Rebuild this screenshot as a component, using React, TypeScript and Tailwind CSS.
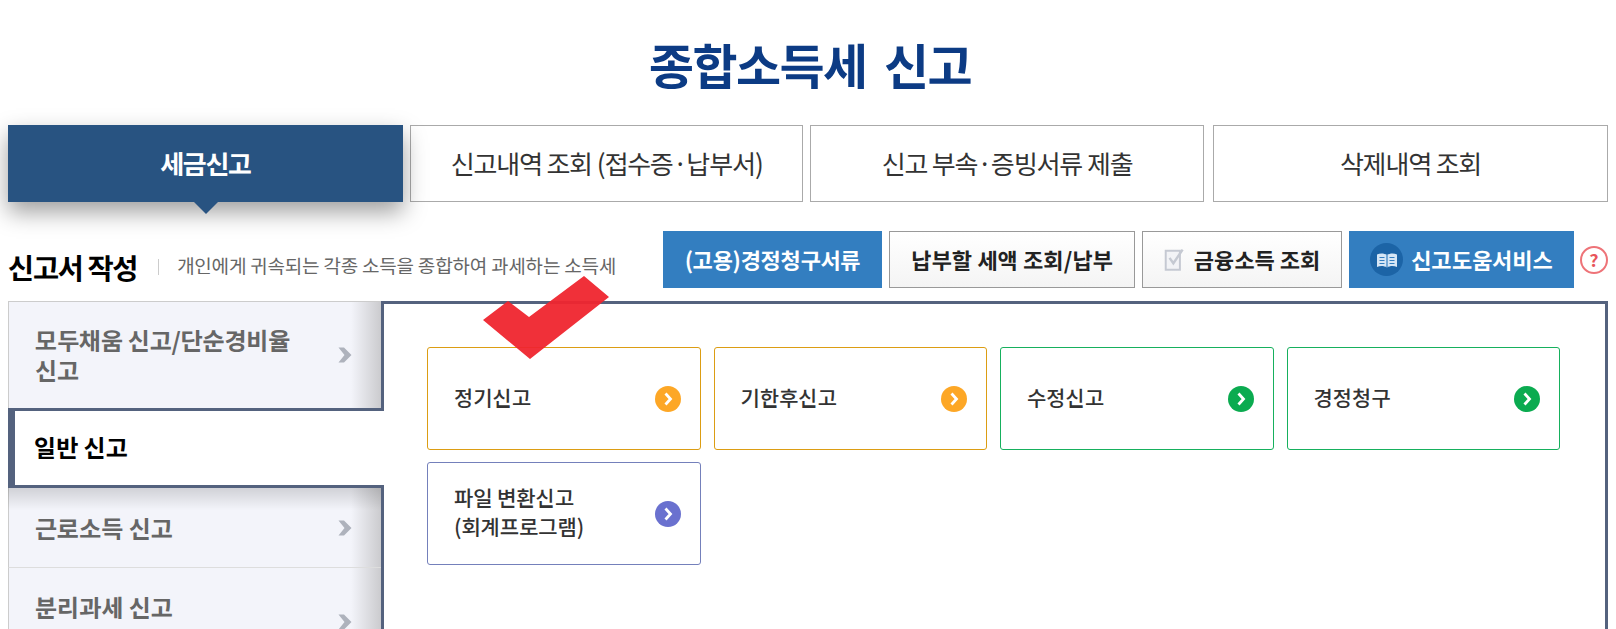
const FONT = "font-['Noto_Sans_KR','Noto_Sans_CJK_KR',sans-serif]";

function Chevron({ className }: { className?: string }) {
  return (
    <svg width="14" height="16" viewBox="0 0 14 16" className={className}>
      <path d="M0.500 0.500h5.500l7.500 7.500-7.500 7.500H0.500l6-7.500z" fill="#aeb2bc" />
    </svg>
  );
}

function Card({ label, border, dot }: { label: React.ReactNode; border: string; dot: string }) {
  return (
    <div className={`h-[103px] flex items-center justify-between pl-[26px] pr-[19px] rounded-[3px] border bg-white ${border}`}>
      <span className="-mt-[3px] text-[21px] leading-[29px] font-medium tracking-[-0.100px] text-[#333]">{label}</span>
      <span className={`w-[26px] h-[26px] rounded-full flex items-center justify-center ${dot}`}>
        <svg width="12" height="14" viewBox="0 0 12 14"><path d="M3.500 1.500 8.500 7 3.500 12.500" fill="none" stroke="#fff" strokeWidth="2.800" /></svg>
      </span>
    </div>
  );
}

const sideBg = "border-l border-[#ccc] bg-[linear-gradient(to_right,#f3f4fa_calc(100%-30px),#cbcbce)]";
const tabText = "flex items-center justify-center pb-[3px] border border-[#aaa] text-[26px] tracking-[-1.100px] text-[#333]";

export default function App() {
  return (
    <div className={`h-[629px] overflow-hidden bg-white relative ${FONT}`}>
      <h1 className="h-[125px] flex items-center justify-center text-[49px] font-bold tracking-[-1.600px] text-[#0c3b84] pt-[2px] pl-[4px] [word-spacing:8px]">
        종합소득세 신고
      </h1>

      <div className="flex pl-2 h-[77px]">
        <div className="relative w-[395px] flex items-center justify-center pb-[3px] bg-[#285381] text-white text-[26px] font-bold tracking-[-1.300px] shadow-[0_10px_22px_rgba(0,0,0,0.38)] z-10">
          세금신고
          <span className="absolute left-1/2 -translate-x-1/2 top-full w-0 h-0 border-x-[12px] border-x-transparent border-t-[12px] border-t-[#285381]" />
        </div>
        <div className={`ml-[7px] w-[393px] ${tabText}`}>신고내역 조회 (접수증·납부서)</div>
        <div className={`ml-[7px] w-[394px] ${tabText}`}>신고 부속·증빙서류 제출</div>
        <div className={`ml-[9px] w-[395px] ${tabText}`}>삭제내역 조회</div>
      </div>

      <div className="flex items-center pl-2 mt-[29px] h-[57px]">
        <span className="mt-[16px] w-[150px] text-[28.500px] font-bold tracking-[-1.400px] text-black">신고서 작성</span>
        <span className="mt-[14px] w-px h-[16px] bg-[#ccc]" />
        <span className="mt-[12px] ml-[18px] w-[486px] whitespace-nowrap text-[19px] tracking-[-0.200px] text-[#666]">개인에게 귀속되는 각종 소득을 종합하여 과세하는 소득세</span>
        <div className="h-[57px] w-[219px] flex items-center justify-center bg-[#337ec0] text-white text-[22px] font-bold tracking-[-0.300px]">(고용)경정청구서류</div>
        <div className="ml-[7px] h-[57px] w-[246px] flex items-center justify-center border border-[#999] bg-[linear-gradient(#fff,#f4f4f4)] text-[22px] font-bold tracking-[0.100px] text-[#222]">납부할 세액 조회/납부</div>
        <div className="ml-[7px] h-[57px] w-[200px] flex items-center justify-center gap-[8px] border border-[#999] bg-[linear-gradient(#fff,#f4f4f4)] text-[22px] font-bold text-[#222]">
          <svg width="22" height="24" viewBox="0 0 20 22">
            <path d="M1.500 2.500h13v17.500h-13z" fill="#f2f3f6" stroke="#c5c9d2" strokeWidth="1.800" />
            <path d="M5 9l3.500 5L17 1.500" fill="none" stroke="#c5c9d2" strokeWidth="2.200" />
          </svg>
          금융소득 조회
        </div>
        <div className="ml-[7px] h-[57px] w-[225px] flex items-center justify-center gap-[8px] bg-[#337ec0] text-white text-[22px] font-bold">
          <span className="w-[33px] h-[33px] rounded-full bg-[#1c64a6] flex items-center justify-center">
            <svg width="22" height="18" viewBox="0 0 22 18">
              <path d="M1 3.500C4 2 8 2 11 4c3-2 7-2 10-.500V16c-3-1.500-7-1.500-10 .500C8 14.500 4 14.500 1 16z" fill="#d6e6f5" />
              <path d="M11 4v12.500M3.500 6.500h5M3.500 9.500h5M3.500 12.500h5M13.500 6.500h5M13.500 9.500h5M13.500 12.500h5" stroke="#337ec0" strokeWidth="1.200" fill="none" />
            </svg>
          </span>
          신고도움서비스
        </div>
        <span className="ml-[6px] w-[28px] h-[28px] rounded-full border-2 border-[#ee7378] bg-white flex items-center justify-center text-[18px] font-bold text-[#e8555b]">?</span>
      </div>

      <div className="flex pl-2 pr-2 mt-[13px] h-[330px]">
        <div className="w-[373px] shrink-0 relative z-10 border-t border-[#ccc]">
          <div className={`h-[106px] flex items-center justify-between pl-[26px] pr-[29px] ${sideBg}`}>
            <span className="text-[24px] leading-[30px] font-bold tracking-[-0.200px] text-[#666]">모두채움 신고/단순경비율<br />신고</span>
            <Chevron />
          </div>
          <div className="relative z-10 h-[80px] w-[376px] flex items-center pl-[19px] pb-[2px] border-[3px] border-l-[7px] border-r-0 border-[#54627e] bg-white text-[24px] font-bold text-black">
            일반 신고
            <span className="absolute -left-[7px] top-full mt-[3px] h-[22px] w-[373px] bg-[linear-gradient(rgba(0,0,0,0.14),rgba(0,0,0,0))]" />
          </div>
          <div className={`h-[80px] flex items-center justify-between pl-[26px] pr-[29px] border-b border-b-[#ddd] ${sideBg}`}>
            <span className="text-[24px] font-bold text-[#666]">근로소득 신고</span>
            <Chevron />
          </div>
          <div className={`h-[108px] flex items-center justify-between pl-[26px] pr-[29px] ${sideBg}`}>
            <span className="self-start mt-[21px] text-[24px] font-bold text-[#666]">분리과세 신고</span>
            <Chevron />
          </div>
        </div>
        <div className="flex-1 border-[3px] border-[#54627e] border-b-0 pl-[43px] pr-[45px] pt-[43px] grid grid-cols-4 gap-x-[13px] gap-y-[12px] content-start">
          <Card label="정기신고" border="border-[#dc9d13]" dot="bg-[#fda726]" />
          <Card label="기한후신고" border="border-[#dc9d13]" dot="bg-[#fda726]" />
          <Card label="수정신고" border="border-[#16b05d]" dot="bg-[#0bab50]" />
          <Card label="경정청구" border="border-[#16b05d]" dot="bg-[#0bab50]" />
          <Card label={<>파일 변환신고<br />(회계프로그램)</>} border="border-[#7480bb]" dot="bg-[#6a71cf]" />
        </div>
      </div>

      <svg className="absolute left-[480px] top-[272px] z-20 opacity-95" width="132" height="90" viewBox="480 272 132 90">
        <polygon points="584,276 609,297 530,359 483,320 508,301 529,317" fill="#f0252f" />
      </svg>
    </div>
  );
}
